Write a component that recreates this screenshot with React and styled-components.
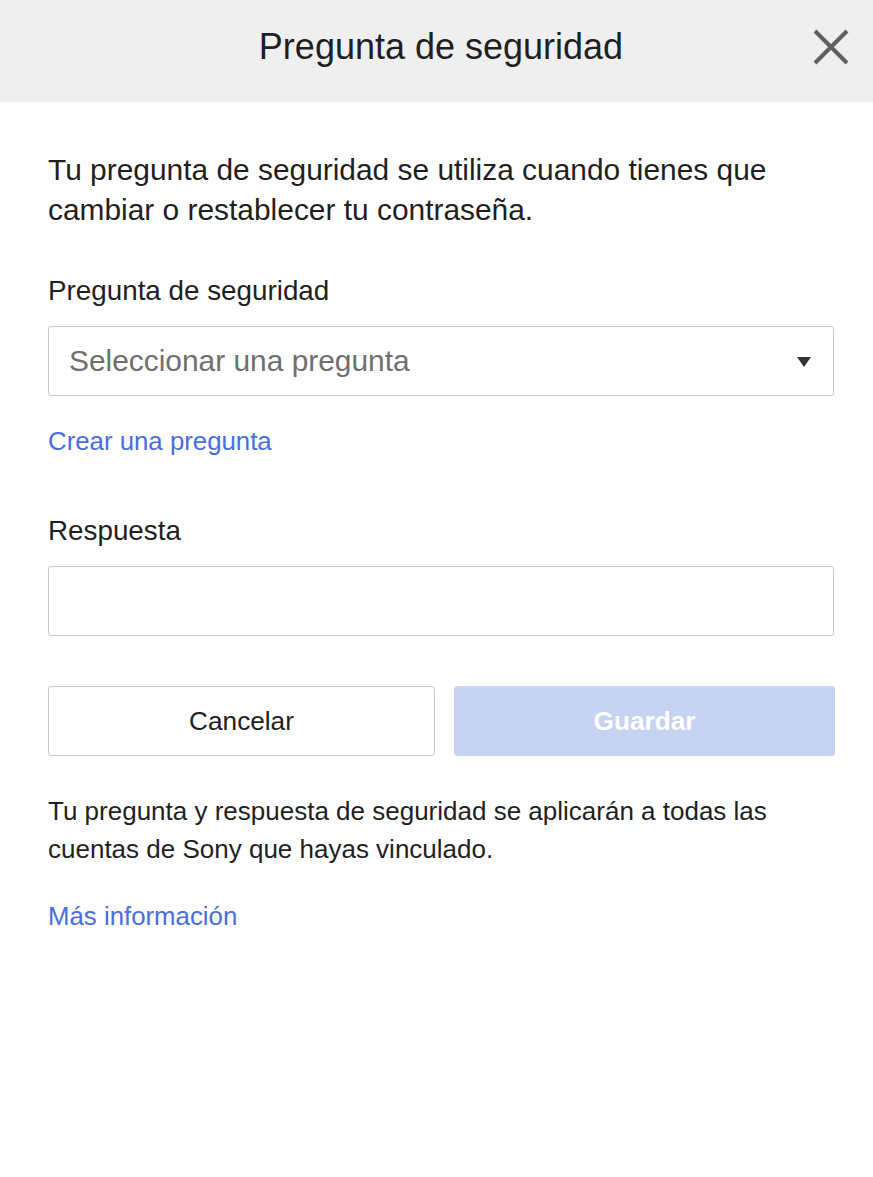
import React from "react";
import styled, { createGlobalStyle } from "styled-components";

const GlobalStyle = createGlobalStyle`
  html, body {
    margin: 0;
    padding: 0;
    background: #fff;
    font-family: "Liberation Sans", Arial, sans-serif;
    color: #1f1f1f;
  }
`

const Dialog = styled.div`
  width: 873px;
  min-height: 1177px;
  background: #fff;
`

const Header = styled.header`
  height: 102px;
  box-sizing: border-box;
  padding: 0 0 8px 9px;
  background: #efefef;
  display: flex;
  align-items: center;
  justify-content: center;
  position: relative;
`

const Title = styled.h1`
  margin: 0;
  font-size: 36px;
  font-weight: 400;
  color: #1f1f1f;
`

const CloseButton = styled.button`
  position: absolute;
  right: 22px;
  top: 27px;
  width: 40px;
  height: 40px;
  padding: 0;
  border: 0;
  background: none;
  display: flex;
  align-items: center;
  justify-content: center;
`

const Body = styled.div`
  padding: 48px 39px 0 48px;
  display: flex;
  flex-direction: column;
`

const Intro = styled.p`
  margin: 0 0 46px;
  font-size: 29.9px;
  line-height: 40px;
`

const Label = styled.label`
  font-size: 27.8px;
  line-height: 30px;
  margin-bottom: 20px;
`

const Field = styled.div`
  height: 70px;
  box-sizing: border-box;
  border: 1px solid #c8c8c8;
  border-radius: 3px;
  display: flex;
  align-items: center;
  padding: 0 22px 0 20px;
  font-size: 29.9px;
  color: #6f6f6f;
`

const Placeholder = styled.span`
  flex: 1;
`

const Caret = styled.span`
  width: 0;
  height: 0;
  border-left: 7.5px solid transparent;
  border-right: 7.5px solid transparent;
  border-top: 10px solid #333;
  margin-top: 1px;
`

const Link = styled.a`
  color: #4a6ee0;
  font-size: 25.8px;
  line-height: 30px;
  text-decoration: none;
  align-self: flex-start;
  margin-top: ${p => p.top || 0}px;
  margin-bottom: ${p => p.bottom || 0}px;
`

const Buttons = styled.div`
  display: grid;
  grid-template-columns: 387px 381px;
  gap: 19px;
  margin-top: 50px;
`

const Button = styled.button`
  height: 70px;
  box-sizing: border-box;
  border-radius: 3px;
  font-family: "Liberation Sans", Arial, sans-serif;
  font-size: 26.2px;
  border: 1px solid ${p => (p.primary ? "#c5d2f2" : "#c8c8c8")};
  background: ${p => (p.primary ? "#c5d2f2" : "#fff")};
  color: ${p => (p.primary ? "#fff" : "#1f1f1f")};
  font-weight: ${p => (p.primary ? 700 : 400)};
`

const Note = styled.p`
  margin: 36px 0 33px;
  font-size: 26px;
  line-height: 38px;
`

export default function App() {
  return (
    <>
      <GlobalStyle />
      <Dialog>
        <Header>
          <Title>Pregunta de seguridad</Title>
          <CloseButton aria-label="Cerrar">
            <svg width="36" height="36" viewBox="0 0 36 36">
              <path d="M2 2 L34 34 M34 2 L2 34" stroke="#5f5f5f" strokeWidth="4" fill="none" />
            </svg>
          </CloseButton>
        </Header>
        <Body>
          <Intro>
            Tu pregunta de seguridad se utiliza cuando tienes que cambiar o restablecer tu contraseña.
          </Intro>
          <Label>Pregunta de seguridad</Label>
          <Field>
            <Placeholder>Seleccionar una pregunta</Placeholder>
            <Caret />
          </Field>
          <Link href="#" top={30} bottom={60}>Crear una pregunta</Link>
          <Label>Respuesta</Label>
          <Field />
          <Buttons>
            <Button>Cancelar</Button>
            <Button primary>Guardar</Button>
          </Buttons>
          <Note>
            Tu pregunta y respuesta de seguridad se aplicarán a todas las cuentas de Sony que hayas vinculado.
          </Note>
          <Link href="#">Más información</Link>
        </Body>
      </Dialog>
    </>
  )
}
